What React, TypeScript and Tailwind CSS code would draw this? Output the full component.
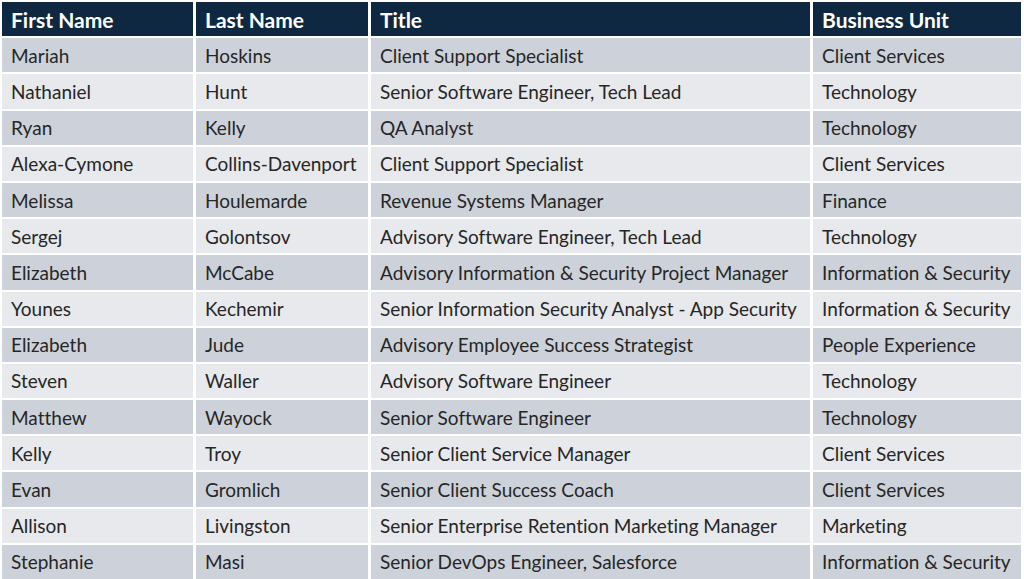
import React from "react";

const HEADERS = ["First Name", "Last Name", "Title", "Business Unit"];

const ROWS: string[][] = [
  ["Mariah", "Hoskins", "Client Support Specialist", "Client Services"],
  ["Nathaniel", "Hunt", "Senior Software Engineer, Tech Lead", "Technology"],
  ["Ryan", "Kelly", "QA Analyst", "Technology"],
  ["Alexa-Cymone", "Collins-Davenport", "Client Support Specialist", "Client Services"],
  ["Melissa", "Houlemarde", "Revenue Systems Manager", "Finance"],
  ["Sergej", "Golontsov", "Advisory Software Engineer, Tech Lead", "Technology"],
  ["Elizabeth", "McCabe", "Advisory Information & Security Project Manager", "Information & Security"],
  ["Younes", "Kechemir", "Senior Information Security Analyst - App Security", "Information & Security"],
  ["Elizabeth", "Jude", "Advisory Employee Success Strategist", "People Experience"],
  ["Steven", "Waller", "Advisory Software Engineer", "Technology"],
  ["Matthew", "Wayock", "Senior Software Engineer", "Technology"],
  ["Kelly", "Troy", "Senior Client Service Manager", "Client Services"],
  ["Evan", "Gromlich", "Senior Client Success Coach", "Client Services"],
  ["Allison", "Livingston", "Senior Enterprise Retention Marketing Manager", "Marketing"],
  ["Stephanie", "Masi", "Senior DevOps Engineer, Salesforce", "Information & Security"],
];

export default function App() {
  return (
    <div
      className="w-[1024px] h-[579px] bg-white pt-[2px] pl-[2px] pr-[3px] grid grid-cols-[191px_172px_439px_1fr] grid-rows-[repeat(16,1fr)] gap-x-[3px] gap-y-[2px] overflow-hidden [font-variant-ligatures:none]"
      style={{ fontFamily: "Lato, 'Open Sans', sans-serif" }}
    >
      {/* header */}
      {HEADERS.map((h) => (
        <div
          key={h}
          className="bg-[#0e2841] text-white font-bold text-[21px] px-[9px] flex items-center leading-none whitespace-nowrap"
        >
          {h}
        </div>
      ))}

      {/* body rows, alternating */}
      {ROWS.map((row, i) =>
        row.map((cell, j) => (
          <div
            key={i + "-" + j}
            className={
              (i % 2 === 0 ? "bg-[#cdd2da]" : "bg-[#e7e9ec]") +
              " text-[#262626] text-[19px] px-[9px] flex items-center leading-none whitespace-nowrap"
            }
          >
            {cell}
          </div>
        ))
      )}
    </div>
  );
}
